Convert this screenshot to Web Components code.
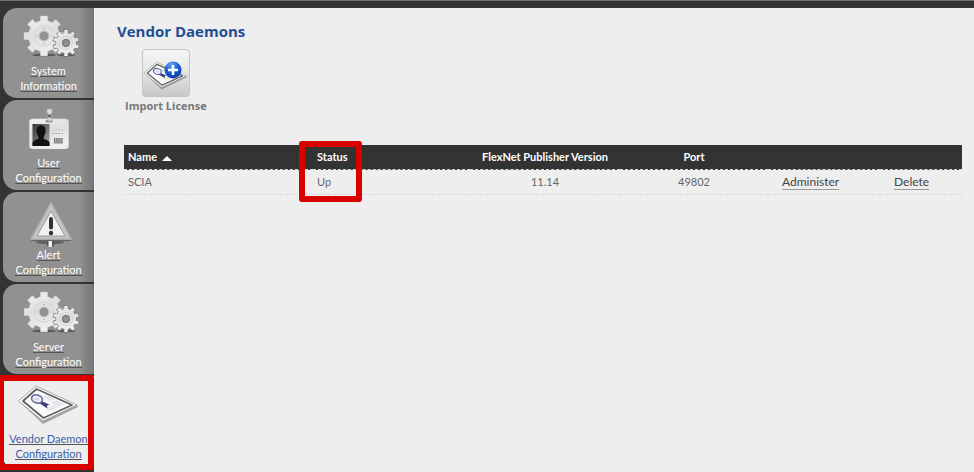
<!DOCTYPE html>
<html lang="en">
<head>
<meta charset="utf-8">
<title>Vendor Daemons</title>
<style>
	html, body{
		height: 100%;
	}
	body{
		margin: 0;
		background: #eee;
		font-family: Lato, "Open Sans", sans-serif;
		font-size: 11px;
	}
</style>
</head>
<body>
<license-admin></license-admin>

<script>
// Outline of a cog with its hole, to be filled with the evenodd rule
function gearPath(cx, cy, outer, inner, teeth, hole){
	let points = [];
	let step = Math.PI * 2 / teeth;
	for(let i = 0; i < teeth; i++){
		let a = i * step - Math.PI / 2;
		[[-0.27, inner], [-0.21, outer], [0.21, outer], [0.27, inner]].forEach(([k, r]) => {
			points.push((cx + Math.cos(a + k * step) * r).toFixed(1) + ' ' + (cy + Math.sin(a + k * step) * r).toFixed(1));
		});
	}
	return `M${points.join('L')}ZM${cx - hole} ${cy}a${hole} ${hole} 0 1 0 ${hole * 2} 0a${hole} ${hole} 0 1 0 ${-hole * 2} 0Z`;
}

const CERTIFICATE = `
	<path d="M1.500 18L26 41L61 24L60 22L26 38Z" fill="#777" opacity=".6"/>
	<path d="M1.500 18L19 3L60 22L26 38Z" fill="#fcfcfc" stroke="#888" stroke-width=".7"/>
	<path d="M6 18L19.500 6L55 22L26.500 35Z" fill="#fff" stroke="#5c6460" stroke-width="1.800" stroke-linejoin="round"/>
	<path d="M9 18L20 8.500L51 22L27 33Z" fill="#f8f9fb"/>
	<path d="M25 14L30 12L38 16L33 18ZM34 19L40 17L48 21L33 28L29 26L37 22Z" fill="#e4e6e9"/>
	<path d="M24 18L32.500 21.500L30 22.500L30.500 25.500L22 20Z" fill="#3c3c78"/>
	<ellipse cx="20" cy="16" rx="5.500" ry="4" transform="rotate(18 20 16)" fill="#eef0fa" stroke="#666a9c" stroke-width="1.600"/>
	<ellipse cx="20" cy="16" rx="2.500" ry="1.500" fill="#d5d8ea"/>`;

const ICONS = {
	gears: `
		<ellipse cx="27" cy="40" rx="12" ry="1.500" fill="#333" opacity=".6"/>
		<ellipse cx="49" cy="40" rx="9" ry="1.500" fill="#333" opacity=".6"/>
		<path d="${gearPath(27, 21, 20, 15.5, 8, 5)}" fill="url(#metal)" fill-rule="evenodd" stroke="#eee" stroke-width=".6" stroke-linejoin="round"/>
		<circle cx="27" cy="21" r="10" fill="none" stroke="#d3d3d3" stroke-width="1"/>
		<circle cx="27" cy="21" r="5" fill="none" stroke="#bbb" stroke-width="1"/>
		<path d="M27 13v1M27 28v1M19 21h1M34 21h1" stroke="#999" stroke-width="1.200"/>
		<path d="${gearPath(49, 28, 13, 10, 10, 4)}" fill="url(#metal)" fill-rule="evenodd" stroke="#777" stroke-width="1.200" paint-order="stroke" stroke-linejoin="round"/>
		<circle cx="49" cy="28" r="3.500" fill="#909090" stroke="#777" stroke-width="1"/>
		<circle cx="49" cy="28" r="6.500" fill="none" stroke="#d3d3d3" stroke-width="1"/>`,
	badge: `
		<rect x="12.500" y="13" width="39" height="30" rx="3" fill="#555" opacity=".6"/>
		<rect x="12.500" y="12" width="39" height="30" rx="3" fill="url(#metal)" stroke="#ddd" stroke-width=".7"/>
		<rect x="28.500" y="13" width="7" height="2.500" rx="1" fill="#999"/>
		<path d="M30 2h5v4h-1v8h-3V6h-1Z" fill="#ddd" stroke="#aaa" stroke-width=".7"/>
		<circle cx="32.500" cy="9" r="1.700" fill="#666"/>
		<rect x="15.500" y="17" width="17" height="22" fill="url(#photo)"/>
		<path d="M15.500 39V35.500Q16.500 33 21.500 32L21 29Q19 26 19.500 22.500Q20.500 18.500 24 18.500Q28 18.500 28.500 22.500Q29 26 27 29L26.500 32Q31.500 33 32.500 35.500V39Z" fill="#111"/>
		<path d="M35 24.500Q41 20 48 24.500" fill="none" stroke="#ccc"/>
		<path d="M35 26.500h12" stroke="#aaa" stroke-dasharray="2 1"/>
		<path d="M37 33.500h9" stroke="#777" stroke-width="5" stroke-dasharray="1.500 .6"/>
		<path d="M37 36h9" stroke="#888"/>`,
	alert: `
		<ellipse cx="33" cy="43" rx="14" ry="2.500" fill="#444" opacity=".6"/>
		<path d="M30 41h7v6q-3.500 2-7 0Z" fill="#555"/>
		<path d="M31.500 41h3.500v7h-3.500Z" fill="#f4f4f4"/>
		<path d="M34 4L54 40H14Z" fill="#c4c4c4" stroke="#b4b4b4" stroke-width="1.500" stroke-linejoin="round"/>
		<path d="M34 12L48 37H20Z" fill="#f2f2f2" stroke="#999" stroke-width="1" stroke-linejoin="round"/>
		<path d="M14 41.500H54" stroke="#666"/>
		<path d="M34 20v8.500" stroke="#333" stroke-width="4" stroke-linecap="round"/>
		<circle cx="34" cy="34" r="2.200" fill="#333"/>`,
	certificate: CERTIFICATE
};

const DEFS = `
	<defs>
		<linearGradient id="metal" x1="0" y1="0" x2="0.4" y2="1">
			<stop offset="0" stop-color="#f3f3f3"/>
			<stop offset=".5" stop-color="#dfdfdf"/>
			<stop offset="1" stop-color="#eee"/>
		</linearGradient>
		<linearGradient id="photo" x1="0" y1="0" x2="1" y2="1">
			<stop offset="0" stop-color="#333"/>
			<stop offset="1" stop-color="#aaa"/>
		</linearGradient>
	</defs>`;

class HighlightFrame extends HTMLElement {

	constructor(){
		super();
		this.attachShadow({mode : 'open'}).innerHTML = `
			<style>
				:host{
					display: block;
					position: absolute;
					box-sizing: border-box;
					border: 6px solid #d90000;
					border-radius: 3px;
					pointer-events: none;
				}
			</style>
		`;
	}
}

class NavTab extends HTMLElement {

	constructor(){
		super();
		this.attachShadow({mode : 'open'});
	}

	connectedCallback(){
		this.shadowRoot.innerHTML = `
			<style>
				:host{
					display: block;
					position: relative;
				}
				a{
					display: flex;
					flex-direction: column;
					align-items: center;
					box-sizing: border-box;
					min-height: 90px;
					padding: 7px 0 4px;
					border-radius: 14px 0 0 14px;
					background: linear-gradient(to right, transparent 84%, rgba(0, 0, 0, 0.2)), #919191;
					color: #fff;
					line-height: 15px;
					text-align: center;
					text-decoration: none;
				}
				:host([selected]) a{
					border-radius: 8px 0 0 8px;
					background: #eee;
					color: #3c5fa8;
				}
				svg{
					width: 64px;
					height: 48px;
					overflow: visible;
				}
				.line{
					display: block;
					width: fit-content;
					height: 14px;
					margin: 0 auto 1px;
					box-sizing: border-box;
					border-bottom: 1px solid #555;
				}
			</style>
			<a href="#">
				<svg viewBox="0 0 64 48" aria-hidden="true">${DEFS}${ICONS[this.getAttribute('icon')]}</svg>
				<span><span class="line"><slot></slot></span><span class="line"><slot name="second"></slot></span></span>
			</a>
			<slot name="mark"></slot>
		`;
	}
}

class SideNav extends HTMLElement {

	constructor(){
		super();
		this.attachShadow({mode : 'open'}).innerHTML = `
			<style>
				:host{
					display: block;
					background: #333;
				}
				nav{
					display: flex;
					flex-direction: column;
					gap: 2px;
					padding-left: 3px;
				}
				highlight-frame{
					inset: -1px 0 -4px -5px;
				}
			</style>
			<nav>
				<nav-tab icon="gears">System<span slot="second">Information</span></nav-tab>
				<nav-tab icon="badge">User<span slot="second">Configuration</span></nav-tab>
				<nav-tab icon="alert">Alert<span slot="second">Configuration</span></nav-tab>
				<nav-tab icon="gears">Server<span slot="second">Configuration</span></nav-tab>
				<nav-tab icon="certificate" selected>Vendor Daemon<span slot="second">Configuration</span><highlight-frame slot="mark"></highlight-frame></nav-tab>
			</nav>
		`;
	}
}

class ImportButton extends HTMLElement {

	constructor(){
		super();
		this.attachShadow({mode : 'open'}).innerHTML = `
			<style>
				:host{
					display: block;
				}
				button{
					display: flex;
					flex-direction: column;
					align-items: center;
					padding: 0;
					border: 0;
					background: none;
					color: #777;
					font: bold 11px/18px "Open Sans", sans-serif;
					cursor: pointer;
				}
				svg{
					box-sizing: border-box;
					width: 48px;
					height: 48px;
					border: 1px solid #c4c4c4;
					border-radius: 4px;
					background: linear-gradient(#f6f6f6, #e4e4e4 50%, #c8c8c8);
				}
			</style>
			<button type="button">
				<svg viewBox="0 0 46 46" aria-hidden="true">
					<defs>
						<radialGradient id="blue" cx=".4" cy=".2" r=".8">
							<stop offset="0" stop-color="#6aa5f5"/>
							<stop offset=".5" stop-color="#1b62dc"/>
							<stop offset="1" stop-color="#0a3da8"/>
						</radialGradient>
					</defs>
					<g transform="translate(0 10) scale(.72)">${CERTIFICATE}</g>
					<circle cx="30" cy="20" r="8.500" fill="url(#blue)"/>
					<path d="M30 15v10M25 20h10" stroke="#fff" stroke-width="2.500"/>
				</svg>
				<slot></slot>
			</button>
		`;
	}
}

class DaemonTable extends HTMLElement {

	constructor(){
		super();
		this.attachShadow({mode : 'open'}).innerHTML = `
			<style>
				:host{
					display: block;
				}
				table{
					width: 100%;
					table-layout: fixed;
					border-collapse: separate;
					border-spacing: 0;
					color: #666;
				}
				th, td{
					height: 24px;
					padding: 0 4px;
					line-height: 16px;
					text-align: left;
					white-space: nowrap;
				}
				tr > *{
					border-bottom: 1px dashed #d8d8d8;
				}
				th{
					position: relative;
					background: #333;
					color: #fff;
				}
				.center{
					text-align: center;
				}
				.action{
					padding: 0 14px;
					font-size: 12px;
				}
				td a{
					display: inline-block;
					height: 15px;
					line-height: 15px;
					border-bottom: 1px solid #999;
					color: #444;
					text-decoration: none;
					vertical-align: middle;
				}
				.sort{
					display: inline-block;
					margin-left: 2px;
					border: 5px solid transparent;
					border-top: 0;
					border-bottom-color: #fff;
				}
				highlight-frame{
					top: -4px;
					left: -14px;
					width: 63px;
					height: 61px;
				}
			</style>
			<table>
				<colgroup>
					<col style="width: 189px"><col style="width: 157px"><col style="width: 150px">
					<col style="width: 148px"><col style="width: 112px"><col style="width: 82px">
				</colgroup>
				<thead>
					<tr>
						<th scope="col" aria-sort="ascending">Name <span class="sort"></span></th>
						<th scope="col">Status<highlight-frame></highlight-frame></th>
						<th scope="col" class="center">FlexNet Publisher Version</th>
						<th scope="col" class="center">Port</th>
						<th></th>
						<th></th>
					</tr>
				</thead>
				<tbody>
					<tr>
						<td>SCIA</td>
						<td>Up</td>
						<td class="center">11.14</td>
						<td class="center">49802</td>
						<td class="action"><a href="#">Administer</a></td>
						<td class="action"><a href="#">Delete</a></td>
					</tr>
				</tbody>
			</table>
		`;
	}
}

class LicenseAdmin extends HTMLElement {

	constructor(){
		super();
		this.attachShadow({mode : 'open'}).innerHTML = `
			<style>
				:host{
					display: grid;
					grid-template-columns: 94px 1fr;
					box-sizing: border-box;
					min-height: 100vh;
					border-top: 1px solid #6f716f;
					background: linear-gradient(#333 7px, #eee 7px);
					padding-top: 7px;
				}
				main{
					padding: 12px 12px 0 23px;
				}
				h1{
					margin: 0;
					color: #1e4f94;
					font: bold 15px/22px "Open Sans", sans-serif;
				}
				import-button{
					margin: 7px 0 30px 8px;
				}
				daemon-table{
					margin-left: 7px;
				}
			</style>
			<side-nav></side-nav>
			<main>
				<h1>Vendor Daemons</h1>
				<import-button>Import License</import-button>
				<daemon-table></daemon-table>
			</main>
		`;
	}
}

window.customElements.define('highlight-frame', HighlightFrame);
window.customElements.define('nav-tab', NavTab);
window.customElements.define('side-nav', SideNav);
window.customElements.define('import-button', ImportButton);
window.customElements.define('daemon-table', DaemonTable);
window.customElements.define('license-admin', LicenseAdmin);
</script>
</body>
</html>
